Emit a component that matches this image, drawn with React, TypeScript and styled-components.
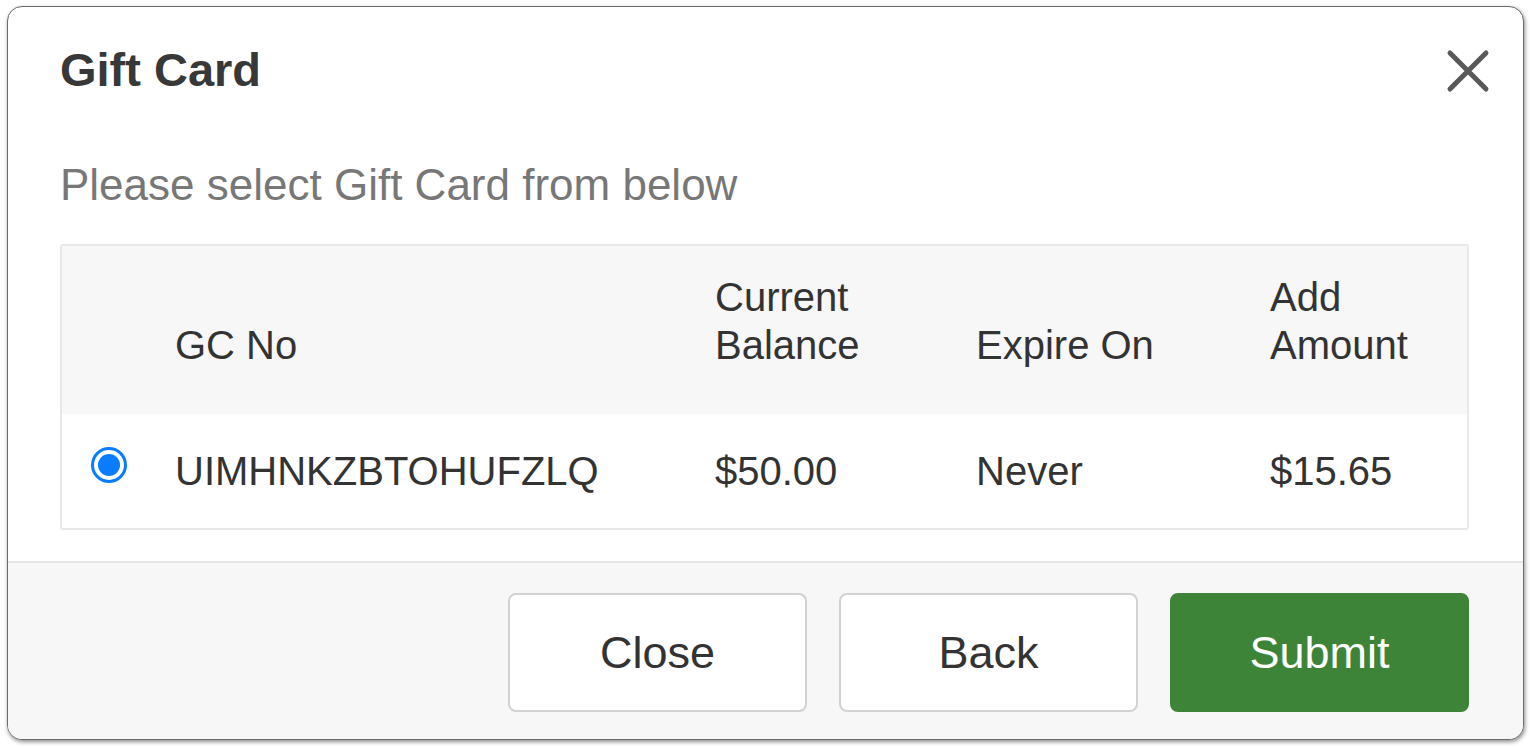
import React, { useState } from 'react';
import styled, { createGlobalStyle } from 'styled-components';

interface GiftCard {
  number: string;
  balance: string;
  expires: string;
  amount: string;
}

const cards: GiftCard[] = [
  { number: 'UIMHNKZBTOHUFZLQ', balance: '$50.00', expires: 'Never', amount: '$15.65' },
];

const GlobalStyle = createGlobalStyle`
  html, body {
    margin: 0;
    background: #ffffff;
  }
  body {
    font-family: "Liberation Sans", Arial, sans-serif;
    color: #333333;
  }
`;

const App: React.FC = () => {
  const [selected, setSelected] = useState(cards[0].number);

  return (
    <>
      <GlobalStyle />
      <Page>
        <Modal>
          <Header>
            <Title>Gift Card</Title>
            <CloseIcon aria-label="Close">
              <svg width="44" height="44" viewBox="0 0 44 44">
                <path
                  d="M4 4 L40 40 M40 4 L4 40"
                  stroke="#595959"
                  strokeWidth="5"
                  strokeLinecap="round"
                  fill="none"
                />
              </svg>
            </CloseIcon>
          </Header>

          <Body>
            <Hint>Please select Gift Card from below</Hint>
            <Table>
              <HeadRow>
                <span />
                <span>GC No</span>
                <span>
                  Current
                  <br />
                  Balance
                </span>
                <span>Expire On</span>
                <span>
                  Add
                  <br />
                  Amount
                </span>
              </HeadRow>
              {cards.map(card => (
                <Row key={card.number} onClick={() => setSelected(card.number)}>
                  <span>
                    <Radio checked={selected === card.number} />
                  </span>
                  <span>{card.number}</span>
                  <span>{card.balance}</span>
                  <span>{card.expires}</span>
                  <span>{card.amount}</span>
                </Row>
              ))}
            </Table>
          </Body>

          <Footer>
            <Button>Close</Button>
            <Button>Back</Button>
            <Button primary>Submit</Button>
          </Footer>
        </Modal>
      </Page>
    </>
  );
};

const Page = styled.div`
  padding: 6px 7px 7px 7px;
  height: 747px;
  box-sizing: border-box;
  display: flex;
`;

const Modal = styled.div`
  flex: 1;
  display: flex;
  flex-direction: column;
  background: #ffffff;
  border: 1px solid #6a6a6a;
  border-radius: 15px;
  box-shadow: 1px 2px 4px rgba(0, 0, 0, 0.45);
  overflow: hidden;
`;

const Header = styled.div`
  display: flex;
  align-items: center;
  justify-content: space-between;
  padding: 35px 33px 0 52px;
`;

const Title = styled.h1`
  margin: 0;
  font-size: 47px;
  line-height: 56px;
  font-weight: 700;
  color: #383838;
`;

const CloseIcon = styled.button`
  border: 0;
  background: none;
  padding: 0;
  margin-top: 2px;
  cursor: pointer;
  display: flex;
`;

const Body = styled.div`
  flex: 1;
  padding: 62px 54px 0 52px;
`;

const Hint = styled.p`
  margin: 0 0 34px;
  font-size: 44px;
  line-height: 50px;
  color: #777777;
`;

const Table = styled.div`
  border: 2px solid #e8e8e8;
  border-radius: 3px;
`;

const cols = `113px 540px 261px 294px 1fr`;

const HeadRow = styled.div`
  display: grid;
  grid-template-columns: ${cols};
  align-items: end;
  height: 168px;
  box-sizing: border-box;
  padding-bottom: 45px;
  background: #f7f7f7;
  font-size: 40px;
  line-height: 48px;
  color: #333333;
`;

const Row = styled.div`
  display: grid;
  grid-template-columns: ${cols};
  align-items: center;
  height: 114px;
  font-size: 40px;
  line-height: 48px;
  color: #333333;
  cursor: pointer;

  > span:first-child {
    display: flex;
    align-items: center;
    margin-top: -12px;
  }
`;

const Radio = styled.span<{ checked: boolean }>`
  width: 36px;
  height: 36px;
  margin-left: 29px;
  box-sizing: border-box;
  border-radius: 50%;
  border: 3px solid ${p => (p.checked ? '#0a7cff' : '#8a8a8a')};
  background: #ffffff;
  display: flex;
  align-items: center;
  justify-content: center;

  &::after {
    content: '';
    width: 22px;
    height: 22px;
    border-radius: 50%;
    background: ${p => (p.checked ? '#0a7cff' : 'transparent')};
  }
`;

const Footer = styled.div`
  display: flex;
  justify-content: flex-end;
  gap: 32px;
  margin-top: 31px;
  padding: 30px 54px 27px;
  background: #f7f7f7;
  border-top: 2px solid #e6e6e6;
`;

const Button = styled.button<{ primary?: boolean }>`
  width: 299px;
  height: 119px;
  border-radius: 8px;
  font-family: "Liberation Sans", Arial, sans-serif;
  font-size: 45px;
  cursor: pointer;
  border: 2px solid ${p => (p.primary ? '#3e8438' : '#d2d2d2')};
  background: ${p => (p.primary ? '#3e8438' : '#ffffff')};
  color: ${p => (p.primary ? '#ffffff' : '#333333')};
`;

export default App;
